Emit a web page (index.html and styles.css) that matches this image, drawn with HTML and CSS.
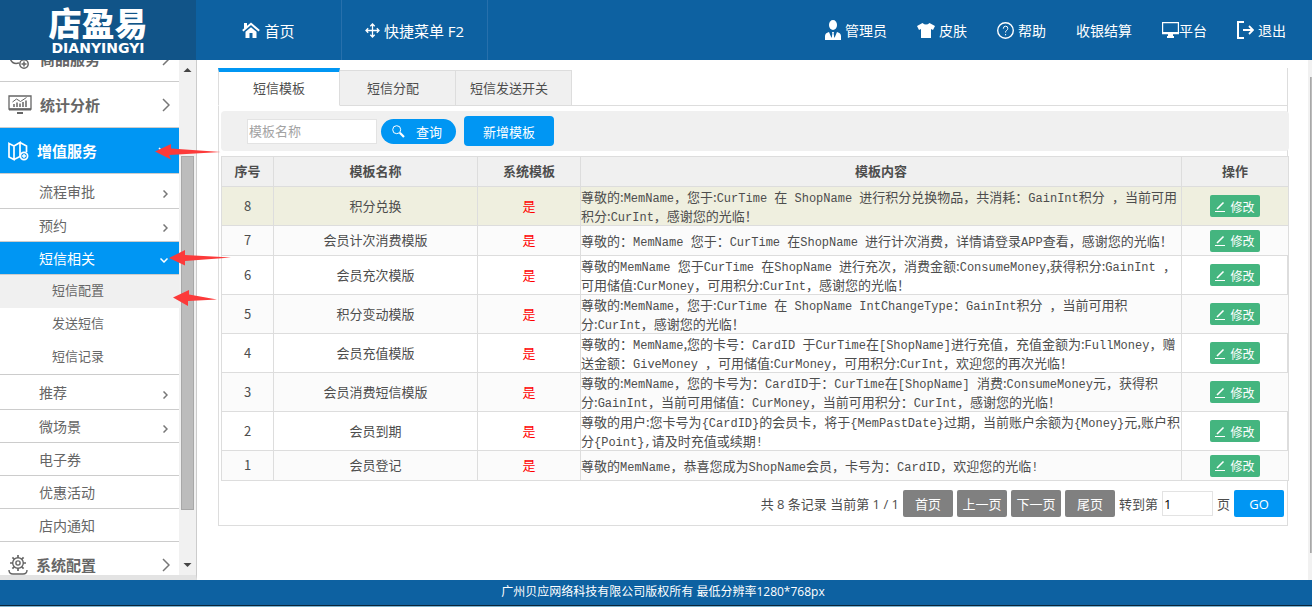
FILE: index.html
```html
<!DOCTYPE html>
<html lang="zh-CN">
<head>
<meta charset="utf-8">
<title>店盈易 - 短信模板</title>
<link rel="stylesheet" href="styles.css">
</head>
<body>
<header class="topbar">
  <a class="logo" href="#"><span class="logo-cn">店盈易</span><span class="logo-en">DIANYINGYI</span></a>
  <nav class="main-nav">
    <a href="#"><svg width="18" height="16" viewBox="0 0 18 16"><path d="M.8 8.800 9 1.800l8.200 7" fill="none" stroke="#fff" stroke-width="2"/><path d="M2 1h3v4L2 7zM3.500 9.800 9 5.200l5.500 4.600V16h-4v-5h-3v5h-4z" fill="#fff"/></svg><span>首页</span></a>
    <a href="#"><svg width="15" height="15" viewBox="0 0 15 15" fill="none" stroke="#fff" stroke-width="1.300"><path d="M7.500 1v13M1 7.500h13M5.300 3.200l2.200-2.200 2.200 2.200M5.300 11.800l2.200 2.200 2.200-2.200M3.200 5.300 1 7.500l2.200 2.200M11.800 5.300 14 7.500l-2.200 2.200"/></svg><span>快捷菜单 F2</span></a>
  </nav>
  <nav class="user-nav">
    <a href="#"><svg width="16" height="20" viewBox="0 0 16 20" fill="#fff"><ellipse cx="8" cy="5" rx="4" ry="5"/><path d="M0 20v-4q0-3 4-4l2.500 6L8 13l1.500 5L12 12q4 1 4 4v4z"/><path d="M7 12h2l-.5 2 .7 4L8 19.500 6.800 18l.7-4z"/></svg><span>管理员</span></a>
    <a href="#"><svg width="18" height="15" viewBox="0 0 18 15"><path d="M5.500 0q3.500 3 7 0L18 3l-2 4-2-1v9H4V6L2 7 0 3z" fill="#fff"/></svg><span>皮肤</span></a>
    <a href="#"><svg width="17" height="17" viewBox="0 0 17 17" fill="none" stroke="#fff"><circle cx="8.500" cy="8.500" r="7.800" stroke-width="1.400"/><path d="M6.300 6.700q0-2.500 2.300-2.500t2.200 2.200q0 1.300-1.200 2t-1 2.100M8.600 12v1.300"/></svg><span>帮助</span></a>
    <a href="#"><span>收银结算</span></a>
    <a class="flush" href="#"><svg width="17" height="16" viewBox="0 0 17 16"><path d="M.6.6h15.800v11H.6z" fill="none" stroke="#fff" stroke-width="1.200"/><path d="M1 10h15v2H1zM6 12h5v2h1v2H5v-2h1z" fill="#fff"/></svg><span>平台</span></a>
    <a href="#"><svg width="17" height="18" viewBox="0 0 17 18" fill="none" stroke="#fff" stroke-width="2"><path d="M7 1H1v16h6M6 9h9"/><path d="m12 5 4 4-4 4" stroke-width="1.800"/></svg><span>退出</span></a>
  </nav>
</header>

<div class="body">
  <aside class="sidebar">
    <div class="menu-view">
      <ul class="menu">
        <li><a class="group" href="#"><svg class="gicon" width="24" height="22" viewBox="0 0 24 22" fill="none" stroke="#666" stroke-width="1.500"><path d="M11 15q-7 2-9-5V3h14v6"/><circle cx="16" cy="16" r="4.200"/><path d="M16 13.500v5M13.500 16h5"/></svg><span>商品服务</span><svg class="chev" width="8" height="14" viewBox="0 0 8 14"><path d="m1 1 6 6-6 6"/></svg></a></li>
        <li><a class="group" href="#"><svg class="gicon" width="24" height="19" viewBox="0 0 24 19" fill="none" stroke="#666" stroke-width="1.300"><path d="M1 1h22v13H1z"/><path d="M9 18h6M1 14.500h22" stroke-width="2"/><path d="M6 12V9M9 12V7.500M12 12V8.500M15 12V7M18 12V5.500" stroke-width="1.500"/><path d="m4.500 7 4-3 4 2.500 6-4" stroke-width="1"/></svg><span>统计分析</span><svg class="chev" width="8" height="14" viewBox="0 0 8 14"><path d="m1 1 6 6-6 6"/></svg></a></li>
        <li><a class="group active" href="#"><svg class="gicon" width="21" height="20" viewBox="0 0 21 20" fill="none" stroke="#fff" stroke-width="1.700"><path d="M1 2.500 6 5v13.500L1 16zM6 5l6-3.500v14L6 18.500M12 1.500 18.500 5v6"/><circle cx="16" cy="15" r="3.600"/><path d="M16 13v4M14 15h4" stroke-width="1.400"/></svg><span>增值服务</span><svg class="chev" width="12" height="8" viewBox="0 0 12 8"><path d="m1 1 5 5 5-5"/></svg></a></li>
        <li><a class="item tall" href="#"><span>流程审批</span><svg class="chev" width="5" height="8" viewBox="0 0 5 8"><path d="m.5.5 3.500 3.500-3.500 3.500"/></svg></a></li>
        <li><a class="item" href="#"><span>预约</span><svg class="chev" width="5" height="8" viewBox="0 0 5 8"><path d="m.5.5 3.500 3.500-3.500 3.500"/></svg></a></li>
        <li><a class="item active" href="#"><span>短信相关</span><svg class="chev" width="8" height="5" viewBox="0 0 8 5"><path d="m.5.5 3.500 3.500 3.500-3.500"/></svg></a>
          <ul class="submenu">
            <li><a class="current" href="#">短信配置</a></li>
            <li><a href="#">发送短信</a></li>
            <li><a href="#">短信记录</a></li>
          </ul></li>
        <li><a class="item tall" href="#"><span>推荐</span><svg class="chev" width="5" height="8" viewBox="0 0 5 8"><path d="m.5.5 3.500 3.500-3.500 3.500"/></svg></a></li>
        <li><a class="item" href="#"><span>微场景</span><svg class="chev" width="5" height="8" viewBox="0 0 5 8"><path d="m.5.5 3.500 3.500-3.500 3.500"/></svg></a></li>
        <li><a class="item" href="#"><span>电子券</span></a></li>
        <li><a class="item" href="#"><span>优惠活动</span></a></li>
        <li><a class="item" href="#"><span>店内通知</span></a></li>
        <li><a class="group" href="#"><svg class="gicon" width="20" height="20" viewBox="0 0 20 20" fill="none" stroke="#666" stroke-width="1.400"><circle cx="10" cy="8" r="5.300"/><circle cx="10" cy="8" r="2.100"/><path d="M10 0v3M10 13v3M2 8h3M15 8h3M4.400 2.400l2 2M13.600 11.600l2 2M15.600 2.400l-2 2M6.400 11.600l-2 2" stroke-width="1.700"/><path d="M1 15q0 4 4 4h10q4 0 4-4"/></svg><span>系统配置</span><svg class="chev" width="8" height="14" viewBox="0 0 8 14"><path d="m1 1 6 6-6 6"/></svg></a></li>
      </ul>
    </div>
    <div class="scrollbar">
      <svg width="9" height="5" viewBox="0 0 9 5"><path d="M.5 5h8l-4-4z" fill="#444"/></svg>
      <div class="track"><div class="thumb"></div></div>
      <svg width="9" height="5" viewBox="0 0 9 5"><path d="M.5 0h8l-4 4z" fill="#444"/></svg>
    </div>
  </aside>

  <main class="content">
    <section class="panel">
      <nav class="tabs">
        <a class="on" href="#">短信模板</a><a href="#">短信分配</a><a href="#">短信发送开关</a><span class="tabs-rest"></span>
      </nav>
      <div class="wide">
        <form class="search">
          <input type="text" placeholder="模板名称" aria-label="模板名称">
          <button type="button" class="query"><svg width="13" height="13" viewBox="0 0 13 13" fill="none" stroke="#fff"><circle cx="4.700" cy="4.700" r="4"/><path d="m7.800 7.800 4.200 4.200" stroke-width="2.200"/></svg><span>查询</span></button>
          <button type="button" class="add">新增模板</button>
        </form>
        <table class="grid">
          <colgroup><col class="c-no"><col class="c-name"><col class="c-sys"><col><col class="c-op"></colgroup>
          <thead><tr><th>序号</th><th>模板名称</th><th>系统模板</th><th>模板内容</th><th>操作</th></tr></thead>
          <tbody>
            <tr class="hover"><td>8</td><td>积分兑换</td><td class="yes">是</td><td class="msg">尊敬的:<i>MemName</i>，您于:<i>CurTime </i>在<i> ShopName </i>进行积分兑换物品，共消耗：<i>GainInt</i>积分<i> </i>，当前可用<br>积分:<i>CurInt</i>，感谢您的光临！</td><td><button type="button" class="edit"><svg width="10" height="11" viewBox="0 0 10 11"><path d="M0 10.500h10" stroke="#fff"/><path d="M2 8 8.500 1.500" stroke="#fff" stroke-width="1.600"/></svg><span>修改</span></button></td></tr>
            <tr><td>7</td><td>会员计次消费模版</td><td class="yes">是</td><td class="msg">尊敬的：<i>MemName </i>您于：<i>CurTime </i>在<i>ShopName </i>进行计次消费，详情请登录<i>APP</i>查看，感谢您的光临！</td><td><button type="button" class="edit"><svg width="10" height="11" viewBox="0 0 10 11"><path d="M0 10.500h10" stroke="#fff"/><path d="M2 8 8.500 1.500" stroke="#fff" stroke-width="1.600"/></svg><span>修改</span></button></td></tr>
            <tr><td>6</td><td>会员充次模版</td><td class="yes">是</td><td class="msg">尊敬的<i>MemName </i>您于<i>CurTime </i>在<i>ShopName </i>进行充次，消费金额:<i>ConsumeMoney</i>,获得积分:<i>GainInt </i>，<br>可用储值:<i>CurMoney</i>，可用积分:<i>CurInt</i>，感谢您的光临！</td><td><button type="button" class="edit"><svg width="10" height="11" viewBox="0 0 10 11"><path d="M0 10.500h10" stroke="#fff"/><path d="M2 8 8.500 1.500" stroke="#fff" stroke-width="1.600"/></svg><span>修改</span></button></td></tr>
            <tr><td>5</td><td>积分变动模版</td><td class="yes">是</td><td class="msg">尊敬的:<i>MemName</i>，您于:<i>CurTime </i>在<i> ShopName IntChangeType</i>：<i>GainInt</i>积分<i> </i>，当前可用积<br>分:<i>CurInt</i>，感谢您的光临！</td><td><button type="button" class="edit"><svg width="10" height="11" viewBox="0 0 10 11"><path d="M0 10.500h10" stroke="#fff"/><path d="M2 8 8.500 1.500" stroke="#fff" stroke-width="1.600"/></svg><span>修改</span></button></td></tr>
            <tr><td>4</td><td>会员充值模版</td><td class="yes">是</td><td class="msg">尊敬的：<i>MemName</i>,您的卡号：<i>CardID </i>于<i>CurTime</i>在<i>[ShopName]</i>进行充值，充值金额为:<i>FullMoney</i>，赠<br>送金额：<i>GiveMoney </i>，可用储值:<i>CurMoney</i>，可用积分:<i>CurInt</i>，欢迎您的再次光临！</td><td><button type="button" class="edit"><svg width="10" height="11" viewBox="0 0 10 11"><path d="M0 10.500h10" stroke="#fff"/><path d="M2 8 8.500 1.500" stroke="#fff" stroke-width="1.600"/></svg><span>修改</span></button></td></tr>
            <tr><td>3</td><td>会员消费短信模版</td><td class="yes">是</td><td class="msg">尊敬的:<i>MemName</i>，您的卡号为：<i>CardID</i>于：<i>CurTime</i>在<i>[ShopName] </i>消费:<i>ConsumeMoney</i>元，获得积<br>分:<i>GainInt</i>，当前可用储值：<i>CurMoney</i>，当前可用积分：<i>CurInt</i>，感谢您的光临！</td><td><button type="button" class="edit"><svg width="10" height="11" viewBox="0 0 10 11"><path d="M0 10.500h10" stroke="#fff"/><path d="M2 8 8.500 1.500" stroke="#fff" stroke-width="1.600"/></svg><span>修改</span></button></td></tr>
            <tr><td>2</td><td>会员到期</td><td class="yes">是</td><td class="msg">尊敬的用户:您卡号为<i>{CardID}</i>的会员卡，将于<i>{MemPastDate}</i>过期，当前账户余额为<i>{Money}</i>元,账户积<br>分<i>{Point},</i>请及时充值或续期<i>!</i></td><td><button type="button" class="edit"><svg width="10" height="11" viewBox="0 0 10 11"><path d="M0 10.500h10" stroke="#fff"/><path d="M2 8 8.500 1.500" stroke="#fff" stroke-width="1.600"/></svg><span>修改</span></button></td></tr>
            <tr><td>1</td><td>会员登记</td><td class="yes">是</td><td class="msg">尊敬的<i>MemName</i>，恭喜您成为<i>ShopName</i>会员，卡号为：<i>CardID</i>，欢迎您的光临<i>!</i></td><td><button type="button" class="edit"><svg width="10" height="11" viewBox="0 0 10 11"><path d="M0 10.500h10" stroke="#fff"/><path d="M2 8 8.500 1.500" stroke="#fff" stroke-width="1.600"/></svg><span>修改</span></button></td></tr>
          </tbody>
        </table>
      </div>
      <div class="pager">
        <span>共 8 条记录 当前第 1 / 1</span>
        <button type="button">首页</button><button type="button">上一页</button><button type="button">下一页</button><button type="button">尾页</button>
        <label for="page">转到第</label><input id="page" type="text" value="1"><span class="unit">页</span>
        <button type="button" class="go">GO</button>
      </div>
    </section>
    <div class="page-scroll"><div class="page-thumb"></div></div>
  </main>
</div>

<footer class="footer">广州贝应网络科技有限公司版权所有 最低分辨率1280*768px</footer>

<svg class="arrow a1" width="67" height="16" viewBox="0 0 67 16"><path d="M0 7.500 16 0v4.500L66 8 14 11l2 4.500z"/></svg>
<svg class="arrow a2" width="62" height="16" viewBox="0 0 62 16"><path d="M0 8 16 0v5l46 2.500L16 11v4.500z"/></svg>
<svg class="arrow a3" width="44" height="16" viewBox="0 0 44 16"><path d="M0 7.500 16 0v4.500L44 9.500 15 11v5z"/></svg>
</body>
</html>
```
FILE: styles.css
```css
* { box-sizing: border-box; }

body {
  margin: 0;
  height: 100vh;
  display: flex;
  flex-direction: column;
  overflow: hidden;
  background: #fff;
  color: #4d4d4d;
  font-family: "Open Sans", "Noto Sans CJK SC", sans-serif;
  font-size: 13px;
}

a { color: inherit; text-decoration: none; }
ul { list-style: none; margin: 0; padding: 0; }
svg { flex: none; display: block; }
button, input { font-family: inherit; font-size: 13px; margin: 0; }
button { border: 0; padding: 0; color: #fff; }

/* Top bar */
.topbar {
  flex: none;
  display: flex;
  height: 60px;
  background: #0d61a1;
  color: #fff;
}
.logo {
  width: 196px;
  display: flex;
  flex-direction: column;
  align-items: center;
  gap: 2px;
  padding-top: 6px;
  background: #115488;
}
.logo-cn { font: 900 33px/33px "Noto Sans CJK SC", sans-serif; }
.logo-en { font: bold 14px/14px "DejaVu Sans", sans-serif; }
.main-nav, .user-nav { display: flex; }
.main-nav a {
  width: 146px;
  display: flex;
  align-items: center;
  justify-content: center;
  gap: 4px;
  border-right: 1px solid #2770ac;
  font-size: 15px;
}
.user-nav { margin-left: auto; padding-right: 26px; gap: 30px; font-size: 14px; }
.user-nav a { display: flex; align-items: center; gap: 4px; }
.user-nav .flush { gap: 0; }

/* Side menu */
.body { flex: 1; min-height: 0; display: flex; }
.sidebar {
  flex: none;
  width: 197px;
  display: flex;
  border-right: 1px solid #ccc;
  border-bottom: 5px solid #e3e3e3;
}
.menu-view { flex: 1; overflow: hidden; }
.menu { margin-top: -24px; color: #666; }
.group, .item { display: flex; align-items: center; border-bottom: 1px solid #ccc; }
.group { height: 46px; padding: 0 9px 0 8px; gap: 8px; font-size: 15px; font-weight: bold; }
.item { height: 33px; padding: 0 11px 0 39px; font-size: 14px; }
.item.tall { height: 35px; }
.chev { margin-left: auto; fill: none; stroke: #777; stroke-width: 1.500; }
.item .chev { margin-top: 5px; }
.active { background: #0096f3; color: #fff; }
.active .chev { stroke: #fff; }
.submenu { border-bottom: 1px solid #ccc; }
.submenu a { display: block; height: 33px; padding-left: 52px; line-height: 31px; }
.submenu a.current { background: #f0f0f0; }
.scrollbar {
  width: 17px;
  display: flex;
  flex-direction: column;
  align-items: center;
  padding: 7px 0;
  background: #f1f1f1;
}
.track { flex: 1; width: 13px; margin: 5px 0; padding: 79px 0 48px; }
.thumb { height: 100%; background: #bcbcbc; border: 1px solid #a8a8a8; }

/* Content */
.content { flex: 1; min-width: 0; display: flex; align-items: flex-start; padding: 8px 0 0 21px; }
.panel { flex: 1; min-width: 0; border: 1px solid #ddd; border-top: 0; }
.tabs { display: flex; align-items: flex-end; height: 38px; margin-left: -1px; }
.tabs a {
  width: 116px;
  height: 36px;
  line-height: 35px;
  text-align: center;
  background: #f0f0f0;
  border: 1px solid #ddd;
  border-left: 0;
  padding-right: 9px;
}
.tabs a.on {
  width: 122px;
  height: 38px;
  line-height: 33px;
  padding-right: 0;
  background: #fff;
  border: 1px solid #ddd;
  border-top: 4px solid #0096f3;
  border-bottom-color: #fff;
}
.tabs-rest { flex: 1; border-bottom: 1px solid #ddd; }
.wide { padding-left: 2px; margin-right: -2px; }
.search {
  display: flex;
  align-items: center;
  height: 40px;
  margin: 5px 0;
  padding: 0 26px;
  background: #f0f0f0;
  border-radius: 4px;
}
.search input {
  width: 130px;
  height: 25px;
  padding: 0 1px;
  border: 1px solid #e3e3e3;
  background: #fff;
}
.search input::placeholder { color: #a3a3a3; opacity: 1; }
.query {
  display: flex;
  align-items: center;
  gap: 11px;
  width: 75px;
  height: 25px;
  margin: 0 8px 0 4px;
  padding-left: 11px;
  border-radius: 13px;
  background: #0096f3;
}
.add { width: 90px; height: 30px; border-radius: 4px; background: #0096f3; }

/* Table */
.grid {
  width: 100%;
  table-layout: fixed;
  border-collapse: collapse;
  font-family: "Noto Sans CJK SC", sans-serif;
}
.c-no { width: 52px; }
.c-name { width: 204px; }
.c-sys { width: 103px; }
.c-op { width: 107px; }
.grid th, .grid td { height: 30px; padding: 0 0 2px; border: 1px solid #ddd; text-align: center; line-height: 19px; }
.grid th { background: #f0f0f0; font-weight: bold; }
.grid tbody tr:nth-child(even) { background: #fbfbfb; }
.grid tbody .hover { background: #efefdf; }
.grid .yes { color: #f00; }
.grid .msg { padding: 0; text-align: left; white-space: nowrap; }
.grid td:last-child { padding: 0; }
.msg i { font: 12px/1 "Liberation Mono", monospace; white-space: pre; }
.edit {
  display: flex;
  align-items: center;
  justify-content: center;
  gap: 5px;
  width: 50px;
  height: 22px;
  margin: 0 auto;
  border-radius: 2px;
  background: #44b57f;
  font-size: 12px;
}

/* Pagination */
.pager {
  display: flex;
  align-items: center;
  justify-content: flex-end;
  gap: 4px;
  padding: 9px 3px 8px;
}
.pager button { width: 50px; height: 27px; border-radius: 2px; background: #808080; }
.pager input { width: 51px; height: 25px; padding: 0 1px; border: 1px solid #e3e3e3; color: #000; }
.pager .go { background: #0096f3; }

.page-scroll { align-self: stretch; flex: none; width: 4px; margin: -8px 0 0 20px; padding: 17px 0 27px 2px; background: #f1f1f1; }
.page-thumb { height: 100%; background: #bcbcbc; border-left: 1px solid #a8a8a8; }

.footer {
  flex: none;
  height: 27px;
  padding-left: 14px;
  line-height: 24px;
  text-align: center;
  font-size: 12px;
  color: #fff;
  background: #0d61a1;
  border-bottom: 1px solid #7fb4d0;
  box-shadow: inset 0 -1px #0a2438;
}

/* Pointers drawn over the menu */
.arrow { position: absolute; fill: #fc3a3a; }
.a1 { left: 155px; top: 144px; }
.a2 { left: 169px; top: 250px; }
.a3 { left: 173px; top: 290px; }
```
